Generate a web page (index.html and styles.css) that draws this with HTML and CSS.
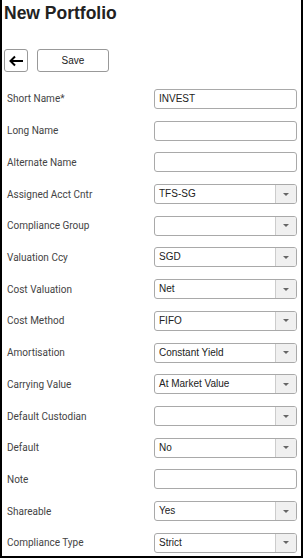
FILE: index.html
```html
<!DOCTYPE html>
<html lang="en">
<head>
    <meta charset="UTF-8">
    <title>New Portfolio</title>
    <link rel="stylesheet" href="styles.css">
</head>
<body>

<div class="panel">
    <h1>New Portfolio</h1>

    <div class="toolbar">
        <button class="back" title="Back">
            <svg width="16" height="12" viewBox="0 0 16 12"><path d="M15 6H2.5M7 1.5L2.5 6 7 10.5" fill="none" stroke="#000" stroke-width="2"/></svg>
        </button>
        <button class="save">Save</button>
    </div>

    <form class="fields">
        <label>Short Name*</label>
        <div class="field"><input type="text" value="INVEST"></div>

        <label>Long Name</label>
        <div class="field"><input type="text"></div>

        <label>Alternate Name</label>
        <div class="field"><input type="text"></div>

        <label>Assigned Acct Cntr</label>
        <div class="field select"><span class="value">TFS-SG</span><span class="caret"></span></div>

        <label>Compliance Group</label>
        <div class="field select"><span class="value"></span><span class="caret"></span></div>

        <label>Valuation Ccy</label>
        <div class="field select"><span class="value">SGD</span><span class="caret"></span></div>

        <label>Cost Valuation</label>
        <div class="field select"><span class="value">Net</span><span class="caret"></span></div>

        <label>Cost Method</label>
        <div class="field select"><span class="value">FIFO</span><span class="caret"></span></div>

        <label>Amortisation</label>
        <div class="field select"><span class="value">Constant Yield</span><span class="caret"></span></div>

        <label>Carrying Value</label>
        <div class="field select"><span class="value">At Market Value</span><span class="caret"></span></div>

        <label>Default Custodian</label>
        <div class="field select"><span class="value"></span><span class="caret"></span></div>

        <label>Default</label>
        <div class="field select"><span class="value">No</span><span class="caret"></span></div>

        <label>Note</label>
        <div class="field"><input type="text"></div>

        <label>Shareable</label>
        <div class="field select"><span class="value">Yes</span><span class="caret"></span></div>

        <label>Compliance Type</label>
        <div class="field select"><span class="value">Strict</span><span class="caret"></span></div>
    </form>
</div>

</body>
</html>
```

FILE: styles.css
```css
body {
    margin: 0;
    font-family: "Liberation Sans", Arial, sans-serif;
    background: #fff;
}

.panel {
    box-sizing: border-box;
    width: 303px;
    height: 558px;
    border: 2px solid #000;
    border-top: none;
    padding: 0 4px 0 2px;
}

h1 {
    margin: 0;
    padding: 3px 0 0 0;
    font-size: 17.5px;
    font-weight: bold;
    color: #222;
    line-height: 20px;
}

.toolbar {
    display: flex;
    gap: 9px;
    margin-top: 26px;
}

.toolbar button {
    box-sizing: border-box;
    height: 23px;
    background: #fff;
    border: 1px solid #999;
    border-radius: 3px;
    font-family: inherit;
    cursor: pointer;
    padding: 0;
}

.back {
    width: 24px;
    display: flex;
    align-items: center;
    justify-content: center;
}

.save {
    width: 72px;
    font-size: 10px;
    color: #222;
}

.fields {
    display: grid;
    grid-template-columns: 150px 1fr;
    grid-auto-rows: 31.72px;
    align-items: center;
    margin-top: 11px;
}

.fields label {
    font-family: Roboto, sans-serif;
    font-size: 10px;
    color: #444;
    padding-left: 3px;
}

.field {
    box-sizing: border-box;
    height: 20px;
    border: 1px solid #a9a9a9;
    border-radius: 3px;
    display: flex;
    overflow: hidden;
    background: #fff;
}

.field input {
    flex: 1;
    border: none;
    outline: none;
    padding: 0 4px;
    font-family: inherit;
    font-size: 10px;
    color: #222;
    background: transparent;
    min-width: 0;
}

.select .value {
    flex: 1;
    padding: 0 4px;
    font-size: 10px;
    color: #222;
    line-height: 18px;
}

.select .caret {
    width: 20px;
    background: #f0f0f0;
    border-left: 1px solid #ccc;
    display: flex;
    align-items: center;
    justify-content: center;
}

.select .caret::after {
    content: "";
    border-left: 3px solid transparent;
    border-right: 3px solid transparent;
    border-top: 3px solid #666;
}
```
